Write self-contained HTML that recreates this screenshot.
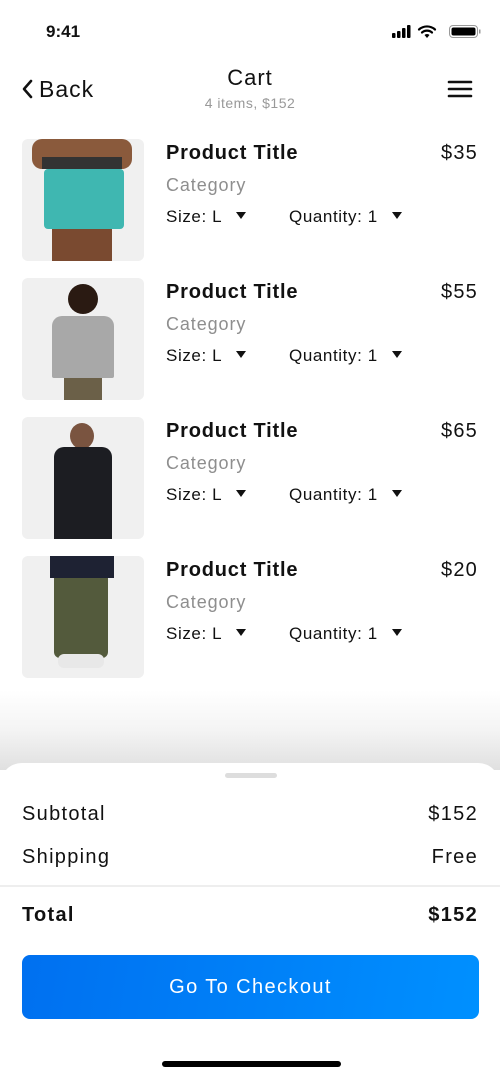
<!DOCTYPE html>
<html><head><meta charset="utf-8"><style>
*{margin:0;padding:0;box-sizing:border-box}
body{width:500px;height:1083px;position:relative;background:#fff;font-family:"Liberation Sans",sans-serif;color:#111;overflow:hidden}
.a{position:absolute}
.img{position:absolute;left:22px;width:122px;height:122px;border-radius:6px;background:#f0f0f0;overflow:hidden}
.t{position:absolute;left:166px;font-size:20px;font-weight:bold;line-height:24px;letter-spacing:0.8px}
.p{position:absolute;right:22px;font-size:20px;line-height:24px;letter-spacing:1.2px}
.c{position:absolute;left:166px;font-size:18px;color:#8e8e8e;line-height:22px;letter-spacing:0.9px}
.s{position:absolute;left:166px;font-size:17px;line-height:22px;width:280px;letter-spacing:0.6px}
.tri{display:inline-block;width:0;height:0;border-left:5px solid transparent;border-right:5px solid transparent;border-top:7px solid #111;vertical-align:middle;margin-left:14px;position:relative;top:-2px}
.row{position:absolute;left:22px;right:22px;font-size:20px;line-height:24px;display:flex;justify-content:space-between;letter-spacing:1.3px}
</style></head><body>
<div class="a" style="left:46px;top:22px;font-size:17px;font-weight:bold">9:41</div>
<svg class="a" style="left:392px;top:24px" width="90" height="16" viewBox="0 0 90 16">
<rect x="0" y="9" width="3.5" height="5" rx="1"/><rect x="5" y="7" width="3.5" height="7" rx="1"/><rect x="10" y="4" width="3.5" height="10" rx="1"/><rect x="15" y="1" width="3.5" height="13" rx="1"/>
<path d="M27 5.5a12 12 0 0 1 16 0M30 8.5a7.5 7.5 0 0 1 10 0" stroke="#000" stroke-width="2.2" fill="none" stroke-linecap="round"/><path d="M32.5 11l2.5 3 2.5-3a3.5 3.5 0 0 0-5 0z"/>
<rect x="57.5" y="1.5" width="28" height="12" rx="3.5" fill="none" stroke="#999" stroke-width="1"/><rect x="59.5" y="3.5" width="24" height="8" rx="2"/><rect x="87" y="5.5" width="1.5" height="4" fill="#999"/>
</svg>
<svg class="a" style="left:21px;top:79px" width="12" height="20"><path d="M10 2L3 10l7 8" stroke="#111" stroke-width="2.6" fill="none" stroke-linecap="round" stroke-linejoin="round"/></svg>
<div class="a" style="left:39px;top:76px;font-size:23px;letter-spacing:1px">Back</div>
<div class="a" style="left:0;width:500px;top:65px;text-align:center;font-size:22px;letter-spacing:1px">Cart</div>
<div class="a" style="left:0;width:500px;top:95px;text-align:center;font-size:14px;color:#999;letter-spacing:0.5px">4 items, $152</div>
<svg class="a" style="left:447px;top:79px" width="26" height="20"><path d="M2 3h22M2 10h22M2 17h22" stroke="#111" stroke-width="2.6" stroke-linecap="round"/></svg>

<div class="img" style="top:139px"><div class="a" style="left:10px;top:0;width:100px;height:30px;background:#8a5a3c;border-radius:10px"></div><div class="a" style="left:20px;top:18px;width:80px;height:12px;background:#333"></div><div class="a" style="left:22px;top:30px;width:80px;height:60px;background:#3fb7b1;border-radius:4px"></div><div class="a" style="left:30px;top:90px;width:60px;height:32px;background:#7a4a30"></div></div>
<div class="t" style="top:141px">Product Title</div><div class="p" style="top:141px">$35</div>
<div class="c" style="top:174px">Category</div>
<div class="s" style="top:206px">Size: L<span class="tri"></span><span style="position:absolute;left:123px">Quantity: 1<span class="tri"></span></span></div>

<div class="img" style="top:278px"><div class="a" style="left:46px;top:6px;width:30px;height:30px;background:#2a1a12;border-radius:50%"></div><div class="a" style="left:30px;top:38px;width:62px;height:62px;background:#a8a8a8;border-radius:10px 10px 2px 2px"></div><div class="a" style="left:42px;top:100px;width:38px;height:22px;background:#6b6048"></div></div>
<div class="t" style="top:280px">Product Title</div><div class="p" style="top:280px">$55</div>
<div class="c" style="top:313px">Category</div>
<div class="s" style="top:345px">Size: L<span class="tri"></span><span style="position:absolute;left:123px">Quantity: 1<span class="tri"></span></span></div>

<div class="img" style="top:417px"><div class="a" style="left:48px;top:6px;width:24px;height:26px;background:#7a5440;border-radius:50%"></div><div class="a" style="left:32px;top:30px;width:58px;height:92px;background:#1c1d22;border-radius:10px 10px 0 0"></div></div>
<div class="t" style="top:419px">Product Title</div><div class="p" style="top:419px">$65</div>
<div class="c" style="top:452px">Category</div>
<div class="s" style="top:484px">Size: L<span class="tri"></span><span style="position:absolute;left:123px">Quantity: 1<span class="tri"></span></span></div>

<div class="img" style="top:556px"><div class="a" style="left:28px;top:0;width:64px;height:22px;background:#1e2233"></div><div class="a" style="left:32px;top:22px;width:54px;height:80px;background:#535a3c;border-radius:0 0 6px 6px"></div><div class="a" style="left:36px;top:98px;width:46px;height:14px;background:#e8e8e8;border-radius:6px"></div></div>
<div class="t" style="top:558px">Product Title</div><div class="p" style="top:558px">$20</div>
<div class="c" style="top:591px">Category</div>
<div class="s" style="top:623px">Size: L<span class="tri"></span><span style="position:absolute;left:123px">Quantity: 1<span class="tri"></span></span></div>

<div class="a" style="left:0;top:690px;width:500px;height:80px;background:linear-gradient(#fff,#f4f4f4 50%,#e0e0e0)"></div>
<div class="a" style="left:0;top:763px;width:500px;height:320px;background:#fff;border-radius:22px 22px 0 0"></div>
<div class="a" style="left:225px;top:773px;width:52px;height:5px;border-radius:3px;background:#ddd"></div>
<div class="row" style="top:802px"><span>Subtotal</span><span>$152</span></div>
<div class="row" style="top:845px"><span>Shipping</span><span>Free</span></div>
<div class="a" style="left:0;top:885px;width:500px;height:2px;background:#eee"></div>
<div class="row" style="top:903px;font-weight:bold"><span>Total</span><span>$152</span></div>
<div class="a" style="left:22px;top:955px;width:457px;height:64px;border-radius:8px;background:linear-gradient(100deg,#0070f0,#0090ff);color:#fff;font-size:20px;text-align:center;line-height:64px;letter-spacing:1.4px">Go To Checkout</div>
<div class="a" style="left:162px;top:1061px;width:179px;height:6px;border-radius:3px;background:#000"></div>
</body></html>
